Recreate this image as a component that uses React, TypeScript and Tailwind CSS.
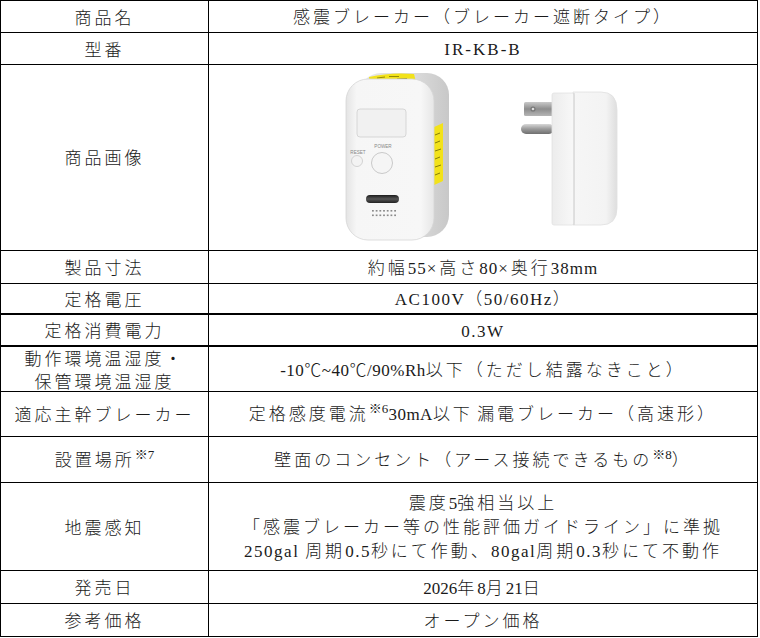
import React from "react";

function Sup({ children }: { children: React.ReactNode }) {
  return (
    <span className="relative -top-[7px] text-[13px] tracking-normal font-['Liberation_Serif','Noto_Sans_CJK_JP',serif]">
      {children}
    </span>
  );
}

function Device() {
  const dots: React.ReactNode[] = [];
  for (let r = 0; r < 2; r++) {
    for (let c = 0; c < 7; c++) {
      dots.push(
        <rect
          key={`${r}-${c}`}
          x={163 + c * 3.7}
          y={145 + r * 4.5}
          width="1.8"
          height="1.6"
          fill="#8a8a8a"
        />
      );
    }
  }
  return (
    <svg width="547" height="185" viewBox="0 0 547 185" className="tracking-normal">
      <defs>
        <linearGradient id="front" x1="0" y1="0" x2="1" y2="0">
          <stop offset="0" stopColor="#e4e4e4" />
          <stop offset="0.12" stopColor="#f6f6f6" />
          <stop offset="0.85" stopColor="#f7f7f7" />
          <stop offset="1" stopColor="#e6e6e6" />
        </linearGradient>
        <linearGradient id="sideb" x1="0" y1="0" x2="1" y2="0">
          <stop offset="0" stopColor="#e8e8e8" />
          <stop offset="0.6" stopColor="#dcdcdc" />
          <stop offset="1" stopColor="#c8c8c8" />
        </linearGradient>
        <linearGradient id="slot" x1="0" y1="0" x2="0" y2="1">
          <stop offset="0" stopColor="#1c1c1c" />
          <stop offset="0.5" stopColor="#555" />
          <stop offset="1" stopColor="#222" />
        </linearGradient>
        <linearGradient id="metal" x1="0" y1="0" x2="0" y2="1">
          <stop offset="0" stopColor="#c9c9c9" />
          <stop offset="0.5" stopColor="#8d8d8d" />
          <stop offset="1" stopColor="#b5b5b5" />
        </linearGradient>
        <linearGradient id="metal2" x1="0" y1="0" x2="0" y2="1">
          <stop offset="0" stopColor="#d8d8d8" />
          <stop offset="0.5" stopColor="#9a9a9a" />
          <stop offset="1" stopColor="#6f6f6f" />
        </linearGradient>
        <linearGradient id="plate" x1="0" y1="0" x2="1" y2="0">
          <stop offset="0" stopColor="#ececec" />
          <stop offset="1" stopColor="#f8f8f8" />
        </linearGradient>
        <linearGradient id="rear" x1="0" y1="0" x2="1" y2="0">
          <stop offset="0" stopColor="#f6f6f6" />
          <stop offset="0.75" stopColor="#f3f3f3" />
          <stop offset="1" stopColor="#dedede" />
        </linearGradient>
      </defs>

      {/* front view: back body */}
      <rect x="150" y="8" width="90" height="164" rx="22" fill="url(#sideb)" />
      {/* top sticker */}
      <path d="M160 12 Q182 7 205 9 L207 17 Q183 16 161 20 Z" fill="#f2e21a" />
      <path d="M168 13 l8 -1 M180 11.5 l10 0 M170 16 l14 -1 M188 14 l10 -0.5" stroke="#6b6400" strokeWidth="0.7" />
      {/* side sticker */}
      <path d="M223 63 L234 58 L234 116 L223 121 Z" fill="#f2e21a" />
      <path d="M226 70 l5 -2 M226 78 l5 -2 M226 86 l6 -2 M226 94 l5 -2 M226 102 l6 -2 M226 110 l5 -2" stroke="#6b6400" strokeWidth="0.8" />
      {/* front face */}
      <rect x="137" y="14" width="88" height="161" rx="22" fill="url(#front)" stroke="#d6d6d6" strokeWidth="0.8" />
      {/* display window */}
      <rect x="148" y="44" width="49" height="28" rx="3" fill="#f1f1f1" stroke="#cfcfcf" strokeWidth="0.8" />
      {/* labels */}
      <text x="149" y="89" fontSize="4.6" fill="#888" textAnchor="middle" fontFamily="Liberation Sans, sans-serif" letterSpacing="0">RESET</text>
      <text x="174" y="83" fontSize="4.6" fill="#888" textAnchor="middle" fontFamily="Liberation Sans, sans-serif" letterSpacing="0">POWER</text>
      {/* buttons */}
      <circle cx="148" cy="96" r="5.5" fill="#f3f3f3" stroke="#c9c9c9" strokeWidth="0.8" />
      <circle cx="173" cy="98" r="10.5" fill="#f5f5f5" stroke="#c4c4c4" strokeWidth="0.9" />
      {/* slot */}
      <rect x="157" y="130" width="33" height="8" rx="4" fill="url(#slot)" />
      {dots}

      {/* side view: prongs */}
      <rect x="315" y="37" width="30" height="14" rx="1.5" fill="url(#metal)" />
      <circle cx="324" cy="44" r="2.6" fill="#777" />
      <circle cx="324" cy="44" r="1.3" fill="#ddd" />
      <rect x="312" y="59" width="33" height="10" rx="5" fill="url(#metal2)" />
      {/* body rear */}
      <path d="M364 27 L392 27 Q408 27 408 45 L408 143 Q408 160 392 160 L364 160 Z" fill="url(#rear)" stroke="#e0e0e0" strokeWidth="0.8" />
      {/* front plate */}
      <rect x="343" y="28" width="22" height="132" rx="2" fill="url(#plate)" stroke="#e2e2e2" strokeWidth="0.8" />
      <line x1="365" y1="28" x2="365" y2="160" stroke="#d0d0d0" strokeWidth="1" />
    </svg>
  );
}

const cellFont =
  "font-['Liberation_Serif','Noto_Sans_CJK_JP',serif] font-light text-[17px] tracking-[3px] text-[#1a1a1a]";

function Row({
  rowClass,
  label,
  children,
}: {
  rowClass: string;
  label: React.ReactNode;
  children: React.ReactNode;
}) {
  return (
    <div className={`flex ${rowClass}`}>
      <div className="w-[208px] shrink-0 border-r border-black flex items-center justify-center text-center leading-[23px] pt-[3px]">
        {label}
      </div>
      <div className="flex-1 flex items-center justify-center text-center leading-[24px] pt-[3px]">
        {children}
      </div>
    </div>
  );
}

export default function App() {
  return (
    <div className="w-[760px] h-[638px] bg-white">
      <div className={`w-[758px] border border-black ${cellFont}`}>
        <Row rowClass="h-[32px] border-b border-black" label="商品名">
          感震ブレーカー（ブレーカー遮断タイプ）
        </Row>
        <Row rowClass="h-[32px] border-b border-black" label="型番">
          <span className="tracking-[2px]">IR-KB-B</span>
        </Row>
        <div className="flex h-[186px] border-b border-black">
          <div className="w-[208px] shrink-0 border-r border-black flex items-center justify-center pt-[3px]">
            商品画像
          </div>
          <div className="flex-1 flex items-start">
            <Device />
          </div>
        </div>
        <Row rowClass="h-[33px] border-b border-black" label="製品寸法">
          <span>
            約幅<span className="tracking-[1px]">55</span>×高さ<span className="tracking-[1px]">80</span>×奥行<span className="tracking-[1px]">38mm</span>
          </span>
        </Row>
        <Row rowClass="h-[31px] border-b-2 border-black" label="定格電圧">
          <span className="tracking-[1.5px]">AC100V（50/60Hz）</span>
        </Row>
        <Row rowClass="h-[32px] border-b-2 border-black" label="定格消費電力">
          <span className="tracking-[1.5px]">0.3W</span>
        </Row>
        <Row
          rowClass="h-[45px] border-b border-black"
          label={
            <span className="leading-[23px]">
              動作環境温湿度・
              <br />
              保管環境温湿度
            </span>
          }
        >
          <span>
            <span className="tracking-[0.5px]">-10℃~40℃/90%Rh</span>以下（ただし結露なきこと）
          </span>
        </Row>
        <Row rowClass="h-[45px] border-b border-black" label="適応主幹ブレーカー">
          <span>
            定格感度電流<Sup>※6</Sup>
            <span className="tracking-[0.5px]">30mA</span>以下<span className="tracking-normal"> </span>漏電ブレーカー（高速形）
          </span>
        </Row>
        <Row
          rowClass="h-[46px] border-b border-black"
          label={
            <span>
              設置場所<Sup>※7</Sup>
            </span>
          }
        >
          <span>
            壁面のコンセント（アース接続できるもの<Sup>※8</Sup>）
          </span>
        </Row>
        <Row rowClass="h-[88px] border-b border-black" label="地震感知">
          <span className="leading-[24px]">
            震度<span className="tracking-normal">5</span>強相当以上
            <br />
            「感震ブレーカー等の性能評価ガイドライン」に準拠
            <br />
            <span className="tracking-[1.5px]">250gal </span>周期<span className="tracking-[1.5px]">0.5</span>秒にて作動、<span className="tracking-[1.5px]">80gal</span>周期<span className="tracking-[1.5px]">0.3</span>秒にて不動作
          </span>
        </Row>
        <Row rowClass="h-[33px] border-b border-black" label="発売日">
          <span>
            <span className="tracking-normal">2026</span>年<span className="tracking-normal">8</span>月<span className="tracking-normal">21</span>日
          </span>
        </Row>
        <Row rowClass="h-[32px]" label="参考価格">
          オープン価格
        </Row>
      </div>
    </div>
  );
}
